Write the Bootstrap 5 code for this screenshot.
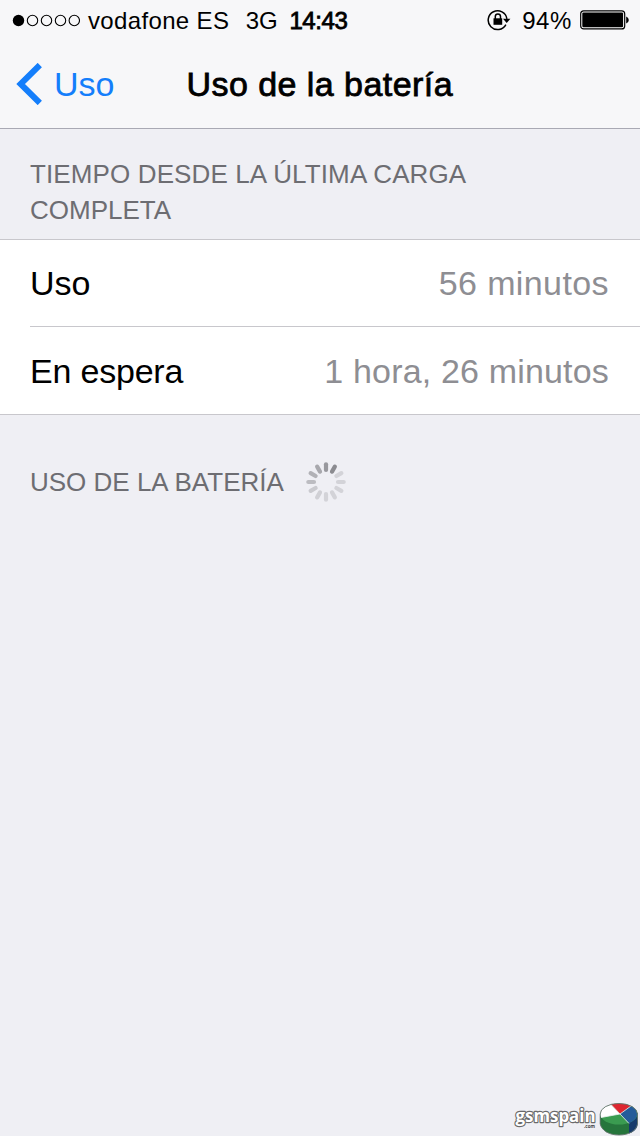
<!DOCTYPE html>
<html lang="es">
<head>
<meta charset="utf-8">
<meta name="viewport" content="width=device-width, initial-scale=1">
<title>Uso de la batería</title>
<link href="https://cdn.jsdelivr.net/npm/bootstrap@5.3.0/dist/css/bootstrap.min.css" rel="stylesheet">
<style>
body{font-family:"Liberation Sans",Arial,sans-serif;background:#efeff4;color:#000;font-size:34px;line-height:40px}
.topbar{background:#f7f7f9;height:129px;border-bottom:1px solid #a9a9b4}
.status{height:40px;font-size:24px;line-height:42px;padding:0 11px 0 12px}
.status span{padding-top:2px}
.carrier{margin-left:8px;letter-spacing:.35px}
.net{margin-left:16.500px;letter-spacing:-.2px}
.clock{margin-left:12px;-webkit-text-stroke:.8px #000;letter-spacing:-.4px}
.lock{margin-right:11px}
.pct{margin-right:8px;letter-spacing:.6px}
.titlebar{height:88px;padding-left:16px}
.back{color:#147efb;gap:12px;width:170.500px}
.heading{-webkit-text-stroke:.8px #000;letter-spacing:.45px}
.section-label{font-size:26px;line-height:36px;color:#6d6d72;padding-left:30px;font-weight:400}
.first-label{height:110px;padding-top:27px;width:520px}
.first-label span{letter-spacing:.12px}
.rows{border:solid #c8c7cc;border-width:1px 0;padding-left:30px;background:#fff}
.rows .list-group-item{height:86px;border:0;padding:0 31px 1px 0;color:#000}
.rows .list-group-item+.list-group-item{border-top:1px solid #c8c7cc;height:88px;padding:1px 31px 0 0}
.rows .list-group-item+.list-group-item span:first-child{letter-spacing:-.2px}
.val{color:#8e8e93;letter-spacing:.4px}
.rows .list-group-item+.list-group-item .val{letter-spacing:.17px}
.second-label{margin-top:47px;gap:22px}
.brand{right:0;bottom:0}
</style>
</head>
<body class="min-vh-100 position-relative overflow-hidden">
<header class="topbar">
  <div class="status d-flex align-items-center text-nowrap">
    <svg width="68" height="14" viewBox="0 0 68 14"><circle cx="6.5" cy="7.5" r="5.7"/><g fill="none" stroke="#000" stroke-width="1.1"><circle cx="20.5" cy="7.5" r="5.2"/><circle cx="34.5" cy="7.5" r="5.2"/><circle cx="48.5" cy="7.5" r="5.2"/><circle cx="62.3" cy="7.5" r="5.2"/></g></svg>
    <span class="carrier">vodafone ES</span><span class="net">3G</span><span class="clock">14:43</span>
    <svg class="lock ms-auto" width="24" height="22" viewBox="0 0 24 22"><path d="M18.9 15.6A9.4 9.4 0 1 1 19.9 9.8" fill="none" stroke="#000" stroke-width="1.5"/><path d="M16 9.8h7.4L19.7 14z"/><path d="M6.5 9.3h8.7v6.5H6.5z"/><path d="M8.3 10V7.6a2.6 2.6 0 0 1 5.2 0V10" fill="none" stroke="#000" stroke-width="1.5"/></svg>
    <span class="pct">94%</span>
    <svg width="49" height="20" viewBox="0 0 49 20"><rect x=".7" y=".9" width="44" height="18" rx="3" fill="#fff" stroke="#000" stroke-width="1.2"/><rect x="2.3" y="2.5" width="40.8" height="14.8" rx="1.2"/><path d="M46.2 6.5q2.6 1 2.6 3.5t-2.6 3.5z"/></svg>
  </div>
  <nav class="titlebar d-flex align-items-center">
    <a class="back d-flex align-items-center text-decoration-none" href="#"><svg width="26" height="42" viewBox="0 0 26 42"><path d="M23.800 2 4.600 21 23.800 40" fill="none" stroke="#147efb" stroke-width="6"/></svg><span>Uso</span></a>
    <span class="heading">Uso de la batería</span>
  </nav>
</header>
<main>
  <h2 class="section-label first-label m-0"><span>TIEMPO DESDE LA ÚLTIMA CARGA</span> COMPLETA</h2>
  <div class="rows list-group list-group-flush rounded-0">
    <div class="list-group-item d-flex justify-content-between align-items-center"><span>Uso</span><span class="val">56 minutos</span></div>
    <div class="list-group-item d-flex justify-content-between align-items-center"><span>En espera</span><span class="val">1 hora, 26 minutos</span></div>
  </div>
  <div class="section-label second-label d-flex align-items-center"><span>USO DE LA BATERÍA</span>
    <svg width="40" height="40" viewBox="-20 -20 40 40" stroke-width="4.200" stroke-linecap="round"><path d="M0-12V-17.700" stroke="#98989d"/><path d="M0-12V-17.700" stroke="#8b8b90" transform="rotate(30)"/><path d="M0-12V-17.700" stroke="#d3d3d8" transform="rotate(60)"/><path d="M0-12V-17.700" stroke="#d3d3d8" transform="rotate(90)"/><path d="M0-12V-17.700" stroke="#d3d3d8" transform="rotate(120)"/><path d="M0-12V-17.700" stroke="#d3d3d8" transform="rotate(150)"/><path d="M0-12V-17.700" stroke="#d3d3d8" transform="rotate(180)"/><path d="M0-12V-17.700" stroke="#d0d0d5" transform="rotate(210)"/><path d="M0-12V-17.700" stroke="#cacacf" transform="rotate(240)"/><path d="M0-12V-17.700" stroke="#bcbcc1" transform="rotate(270)"/><path d="M0-12V-17.700" stroke="#b1b1b6" transform="rotate(300)"/><path d="M0-12V-17.700" stroke="#a8a8ad" transform="rotate(330)"/></svg>
  </div>
</main>
<svg class="brand position-absolute" width="128" height="36" viewBox="0 0 128 36">
  <text x="3.500" y="22" font-family="Open Sans" font-weight="700" font-size="18.500" textLength="80" lengthAdjust="spacingAndGlyphs" fill="#fff" stroke="#6a6a6a" stroke-width="2.400" stroke-linejoin="round" paint-order="stroke">gsmspain</text>
  <text x="72" y="27.500" font-family="Open Sans" font-weight="700" font-size="5" textLength="11" lengthAdjust="spacingAndGlyphs" fill="#444">.com</text>
  <path d="M88 13v11c2 7 9 11 19 11s17-4 18.500-11V13z" fill="#26753c"/>
  <path d="M108 15 117 23.500v10c6-2 8.500-5.500 8.500-9.500V13z" fill="#163a6c"/>
  <ellipse cx="106.800" cy="14" rx="18.600" ry="10.500" fill="#3a9b50"/>
  <path d="M108 14 99 4.500C91 6.500 88.200 10 88.200 14q0 2 1 3.500z" fill="#fff"/>
  <path d="M108 14 99 4.500c6-1.500 14-1.300 20 1.500z" fill="#dd2630"/>
  <path d="M108 14 119 6c8 4 8.500 13-2 17z" fill="#245b9a"/>
  <path d="M89 17.500 108 14l9 9.500M99 4.500l9 9.500 11-8" fill="none" stroke="#edf2f2" stroke-width=".8"/>
  <path d="M88.200 14v10c2 7 9 11 18.800 11s17-4 18.500-11V14a18.600 10.500 0 0 0-37.300 0" fill="none" stroke="#66756f" stroke-width=".9"/>
</svg>
<script src="https://cdn.jsdelivr.net/npm/bootstrap@5.3.0/dist/js/bootstrap.bundle.min.js"></script>
</body>
</html>
